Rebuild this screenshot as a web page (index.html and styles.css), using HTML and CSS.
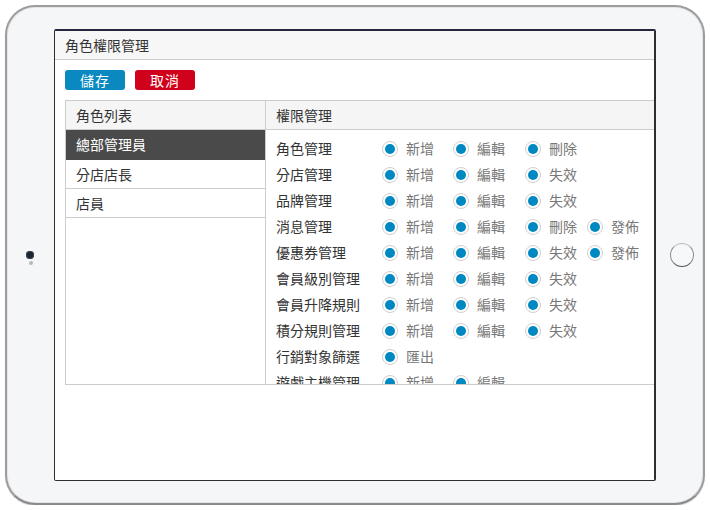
FILE: index.html
```html
<!DOCTYPE html>
<html lang="zh-Hant">
<head>
<meta charset="utf-8">
<title>角色權限管理</title>
<link rel="stylesheet" href="styles.css">
</head>
<body>
<div class="tablet">
  <div class="bezel-left">
    <span class="camera"></span>
    <span class="sensor"></span>
  </div>
  <div class="screen">
    <div class="page-header">角色權限管理</div>
    <div class="toolbar">
      <button class="btn btn-save">儲存</button>
      <button class="btn btn-cancel">取消</button>
    </div>
    <div class="panel">
      <div class="roles">
        <div class="col-head">角色列表</div>
        <div class="role role-active">總部管理員</div>
        <div class="role">分店店長</div>
        <div class="role">店員</div>
      </div>
      <div class="perms">
        <div class="col-head">權限管理</div>
        <div class="perm-list">
          <div class="perm-row"><span class="perm-name">角色管理</span>
            <span class="opt"><i class="radio"></i>新增</span><span class="opt"><i class="radio"></i>編輯</span><span class="opt"><i class="radio"></i>刪除</span></div>
          <div class="perm-row"><span class="perm-name">分店管理</span>
            <span class="opt"><i class="radio"></i>新增</span><span class="opt"><i class="radio"></i>編輯</span><span class="opt"><i class="radio"></i>失效</span></div>
          <div class="perm-row"><span class="perm-name">品牌管理</span>
            <span class="opt"><i class="radio"></i>新增</span><span class="opt"><i class="radio"></i>編輯</span><span class="opt"><i class="radio"></i>失效</span></div>
          <div class="perm-row"><span class="perm-name">消息管理</span>
            <span class="opt"><i class="radio"></i>新增</span><span class="opt"><i class="radio"></i>編輯</span><span class="opt"><i class="radio"></i>刪除</span><span class="opt"><i class="radio"></i>發佈</span></div>
          <div class="perm-row"><span class="perm-name">優惠券管理</span>
            <span class="opt"><i class="radio"></i>新增</span><span class="opt"><i class="radio"></i>編輯</span><span class="opt"><i class="radio"></i>失效</span><span class="opt"><i class="radio"></i>發佈</span></div>
          <div class="perm-row"><span class="perm-name">會員級別管理</span>
            <span class="opt"><i class="radio"></i>新增</span><span class="opt"><i class="radio"></i>編輯</span><span class="opt"><i class="radio"></i>失效</span></div>
          <div class="perm-row"><span class="perm-name">會員升降規則</span>
            <span class="opt"><i class="radio"></i>新增</span><span class="opt"><i class="radio"></i>編輯</span><span class="opt"><i class="radio"></i>失效</span></div>
          <div class="perm-row"><span class="perm-name">積分規則管理</span>
            <span class="opt"><i class="radio"></i>新增</span><span class="opt"><i class="radio"></i>編輯</span><span class="opt"><i class="radio"></i>失效</span></div>
          <div class="perm-row"><span class="perm-name">行銷對象篩選</span>
            <span class="opt"><i class="radio"></i>匯出</span></div>
          <div class="perm-row"><span class="perm-name">遊戲主機管理</span>
            <span class="opt"><i class="radio"></i>新增</span><span class="opt"><i class="radio"></i>編輯</span></div>
        </div>
      </div>
    </div>
  </div>
  <div class="bezel-right">
    <span class="home"></span>
  </div>
</div>
</body>
</html>
```
FILE: styles.css
```css
* { box-sizing: border-box; }
html, body {
  margin: 0;
  padding: 0;
  background: #ffffff;
}
body {
  font-family: "Noto Sans CJK TC", "Noto Sans", sans-serif;
  font-size: 14px;
  color: #333;
}
.tablet {
  margin: 5px 0 0 5px;
  width: 700px;
  height: 500px;
  border: 2px solid #9d9d9d;
  border-bottom-color: #8a8a8a;
  border-radius: 30px;
  background: #f5f6f8;
  display: grid;
  grid-template-columns: 47px 602px 1fr;
  align-items: center;
  box-shadow: inset 0 0 0 1px #e4e5e8, 0 1px 1px rgba(0,0,0,0.15);
}
.bezel-left {
  display: flex;
  flex-direction: column;
  align-items: center;
  padding-top: 6px;
  width: 47px;
}
.camera {
  display: block;
  width: 8px;
  height: 8px;
  border-radius: 50%;
  background: #1c2430;
  box-shadow: 0 0 0 1px #3a4656 inset;
  margin-left: -1px;
}
.sensor {
  display: block;
  width: 4px;
  height: 4px;
  border-radius: 50%;
  background: #b5b9bf;
  margin-top: 2px;
}
.bezel-right {
  display: flex;
  justify-content: center;
  padding-left: 4px;
}
.home {
  display: block;
  width: 24px;
  height: 24px;
  border-radius: 50%;
  border: 1.5px solid #8e8e8e;
  border-top-color: #b8b8b8;
  border-bottom-color: #555;
  background: #f7f8fa;
}
.screen {
  height: 452px;
  background: #ffffff;
  border: 1px solid #2e2e2e;
  border-top: 2px solid #282440;
  border-right: 2px solid #2e2e2e;
  border-radius: 2px;
  overflow: hidden;
}
.page-header {
  height: 29px;
  line-height: 28px;
  padding-left: 10px;
  background: #f7f7f7;
  border-bottom: 1px solid #cccccc;
  color: #333;
}
.toolbar {
  display: flex;
  gap: 10px;
  padding: 10px 0 0 10px;
  height: 30px;
}
.btn {
  width: 60px;
  height: 20px;
  border: none;
  border-radius: 3px;
  color: #fff;
  font-family: "Noto Sans CJK TC", "Noto Sans", sans-serif;
  font-size: 14px;
  line-height: 20px;
  padding: 0;
  letter-spacing: 1px;
}
.btn-save { background: #0a88c0; }
.btn-cancel { background: #d0021b; }
.panel {
  margin: 10px 0 0 10px;
  height: 285px;
  border: 1px solid #cccccc;
  border-right: none;
  display: grid;
  grid-template-columns: 200px 1fr;
}
.roles {
  border-right: 1px solid #cccccc;
}
.col-head {
  height: 29px;
  line-height: 28px;
  padding-left: 10px;
  background: #f5f5f5;
  border-bottom: 1px solid #cccccc;
}
.role {
  height: 29px;
  line-height: 28px;
  padding-left: 10px;
  border-bottom: 1px solid #cccccc;
}
.role-active {
  background: #4a4a4a;
  color: #ffffff;
  border-bottom-color: #4a4a4a;
  height: 30px;
}
.perms {
  overflow: hidden;
  min-width: 0;
}
.perm-list {
  padding: 5px 0 0 10px;
  height: 254px;
  overflow: hidden;
}
.perm-row {
  display: grid;
  grid-template-columns: 106px 71px 72px 62px auto;
  align-items: center;
  height: 26px;
}
.perm-name { color: #333; white-space: nowrap; }
.opt {
  display: flex;
  align-items: center;
  color: #777;
  white-space: nowrap;
}
.radio {
  display: inline-flex;
  align-items: center;
  justify-content: center;
  width: 16px;
  height: 16px;
  margin-right: 8px;
  border-radius: 50%;
  border: 1px solid #cfcfcf;
  background: #fff;
  margin-top: 1px;
}
.radio::after {
  content: "";
  display: block;
  width: 10px;
  height: 10px;
  border-radius: 50%;
  background: #0088c2;
}
```
